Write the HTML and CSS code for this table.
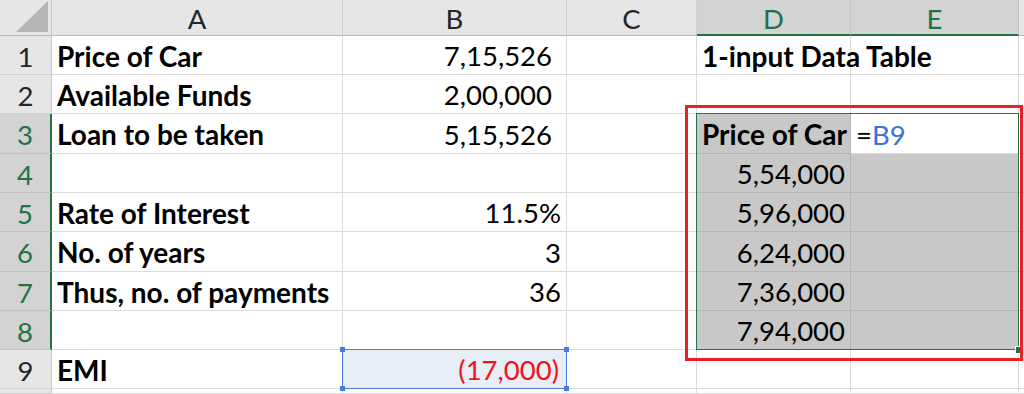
FILE: index.html
```html
<!DOCTYPE html>
<html>
<head>
<meta charset="utf-8">
<link rel="stylesheet" href="styles.css">
</head>
<body>
<div class="sheet">
  <div class="corner"><span class="tri"></span></div>
  <div class="ch">A</div>
  <div class="ch">B</div>
  <div class="ch">C</div>
  <div class="ch ch-sel">D</div>
  <div class="ch ch-sel">E</div>
  <div class="ch ch-last"></div>

  <div class="rh">1</div>
  <div class="cell b">Price of Car</div>
  <div class="cell r pad-acc">7,15,526</div>
  <div class="cell"></div>
  <div class="cell b">1-input Data Table</div>
  <div class="cell"></div>
  <div class="cell"></div>

  <div class="rh">2</div>
  <div class="cell b">Available Funds</div>
  <div class="cell r pad-acc">2,00,000</div>
  <div class="cell"></div>
  <div class="cell"></div>
  <div class="cell"></div>
  <div class="cell"></div>

  <div class="rh rh-sel">3</div>
  <div class="cell b">Loan to be taken</div>
  <div class="cell r pad-acc">5,15,526</div>
  <div class="cell"></div>
  <div class="cell shade b">Price of Car</div>
  <div class="cell active"><span class="eq">=</span><span class="ref">B9</span></div>
  <div class="cell"></div>

  <div class="rh rh-sel">4</div>
  <div class="cell"></div>
  <div class="cell"></div>
  <div class="cell"></div>
  <div class="cell shade r">5,54,000</div>
  <div class="cell shade"></div>
  <div class="cell"></div>

  <div class="rh rh-sel">5</div>
  <div class="cell b">Rate of Interest</div>
  <div class="cell r">11.5%</div>
  <div class="cell"></div>
  <div class="cell shade r">5,96,000</div>
  <div class="cell shade"></div>
  <div class="cell"></div>

  <div class="rh rh-sel">6</div>
  <div class="cell b">No. of years</div>
  <div class="cell r">3</div>
  <div class="cell"></div>
  <div class="cell shade r">6,24,000</div>
  <div class="cell shade"></div>
  <div class="cell"></div>

  <div class="rh rh-sel">7</div>
  <div class="cell b">Thus, no. of payments</div>
  <div class="cell r">36</div>
  <div class="cell"></div>
  <div class="cell shade r">7,36,000</div>
  <div class="cell shade"></div>
  <div class="cell"></div>

  <div class="rh rh-sel">8</div>
  <div class="cell"></div>
  <div class="cell"></div>
  <div class="cell"></div>
  <div class="cell shade r">7,94,000</div>
  <div class="cell shade"></div>
  <div class="cell"></div>

  <div class="rh">9</div>
  <div class="cell b">EMI</div>
  <div class="cell r neg refcell">(17,000)</div>
  <div class="cell"></div>
  <div class="cell"></div>
  <div class="cell"></div>
  <div class="cell"></div>

  <div class="rh"></div>
  <div class="cell"></div>
  <div class="cell"></div>
  <div class="cell"></div>
  <div class="cell"></div>
  <div class="cell"></div>
  <div class="cell"></div>

  <div class="sel-range"><span class="fill-handle"></span></div>
  <div class="ref-box">
    <span class="h h-tl"></span><span class="h h-tr"></span>
    <span class="h h-bl"></span><span class="h h-br"></span>
  </div>
  <div class="red-box"></div>
</div>
</body>
</html>
```

FILE: styles.css
```css
* { box-sizing: border-box; }
html, body { margin: 0; padding: 0; background: #fff; }
body { width: 1024px; height: 394px; overflow: hidden; font-family: Lato, "Liberation Sans", sans-serif; color: #000; }

.sheet {
  position: relative;
  display: grid;
  grid-template-columns: 52px 291px 224px 130px 154px 168px 1fr;
  grid-template-rows: 36px 39px 39px 40px 39px 39px 40px 39px 39px 39px 1fr;
  width: 1024px;
  height: 394px;
  font-size: 27.5px;
}

.corner {
  position: relative;
  background: #e6e6e6;
  border-right: 1px solid #c6c6c6;
  border-bottom: 1px solid #b8b8b8;
}
.tri {
  position: absolute;
  right: 3px;
  bottom: 3px;
  width: 32px;
  height: 31px;
  background: #b5b5b5;
  clip-path: polygon(100% 0, 100% 100%, 0 100%);
}

.ch {
  background: #e6e6e6;
  border-right: 1px solid #d0d0d0;
  border-bottom: 1px solid #b8b8b8;
  display: flex;
  align-items: center;
  justify-content: center;
  color: #262626;
  padding-top: 2px;
}
.ch-sel {
  background: #d3d3d3;
  color: #217346;
  border-right-color: #c2c2c2;
  border-bottom: 2px solid #217346;
}
.ch-last { border-right: none; }

.rh {
  background: #e6e6e6;
  border-right: 1px solid #c6c6c6;
  border-bottom: 1px solid #d2d2d2;
  display: flex;
  align-items: center;
  justify-content: center;
  color: #262626;
  padding-top: 2px;
}
.rh-sel {
  background: #d3d3d3;
  color: #217346;
  border-right: 2px solid #217346;
  border-bottom-color: #c0c0c0;
}

.cell {
  border-right: 1px solid #dadada;
  border-bottom: 1px solid #dadada;
  display: flex;
  align-items: center;
  padding: 1px 5px 0 5px;
  white-space: nowrap;
  overflow: visible;
}
.b { font-weight: 700; font-size: 28px; }
.r { justify-content: flex-end; padding-right: 5px; }
.pad-acc { padding-right: 14px; }

.shade {
  background: #c8c8c8;
  border-right-color: #b4b4b4;
  border-bottom-color: #b4b4b4;
}
.active { background: #fff; }
.eq { color: #000; }
.ref { color: #3b73d6; }

.neg { color: #f01414; padding-right: 7px; }
.refcell { background: #e8eef8; }

.sel-range {
  position: absolute;
  grid-row: 4 / 10;
  grid-column: 5 / 7;
  top: -1px;
  left: -1px;
  right: 0;
  bottom: 0;
  border: 1px solid #217346;
}
.fill-handle {
  position: absolute;
  right: -4px;
  bottom: -4px;
  width: 6px;
  height: 6px;
  background: #217346;
  outline: 1px solid #fff;
}

.ref-box {
  position: absolute;
  grid-row: 10 / 11;
  grid-column: 3 / 4;
  top: -1px;
  left: -1px;
  right: 0;
  bottom: 0;
  border: 1px solid #4a7bd2;
}
.h {
  position: absolute;
  width: 5px;
  height: 5px;
  background: #4a7bd2;
}
.h-tl { left: -3px; top: -3px; }
.h-tr { right: -3px; top: -3px; }
.h-bl { left: -3px; bottom: -3px; }
.h-br { right: -3px; bottom: -3px; }

.red-box {
  position: absolute;
  grid-row: 4 / 10;
  grid-column: 5 / 7;
  top: -9px;
  left: -12px;
  right: -4px;
  bottom: -11px;
  border: 3px solid #e8202a;
  pointer-events: none;
}
```
